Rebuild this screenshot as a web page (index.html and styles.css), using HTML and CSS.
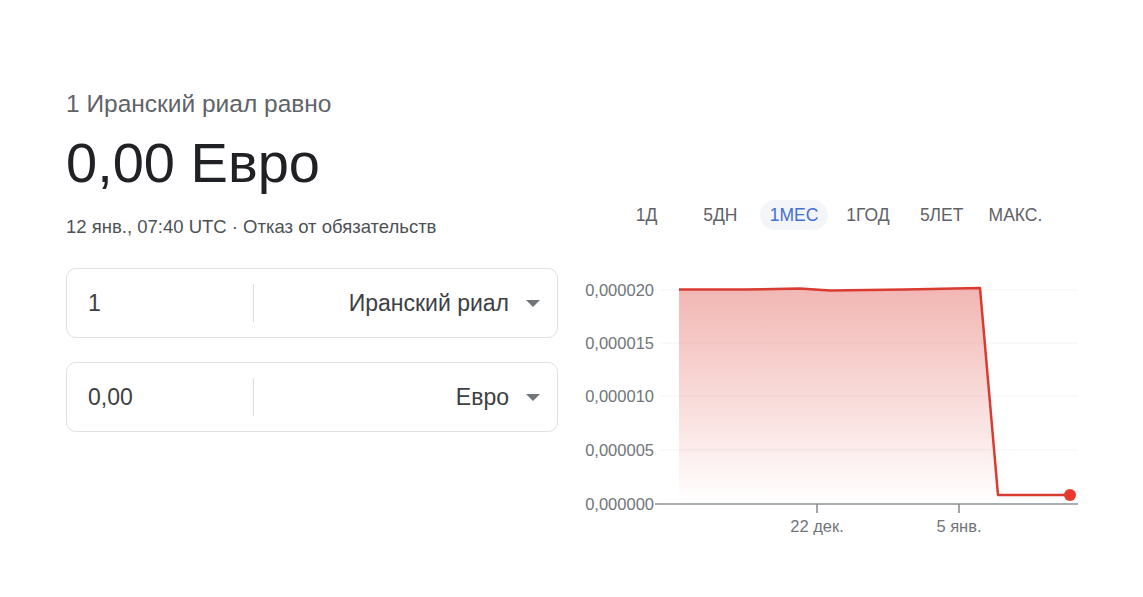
FILE: index.html
```html
<!DOCTYPE html>
<html lang="ru">
<head>
<meta charset="utf-8">
<title>Конвертер валют</title>
<link rel="stylesheet" href="styles.css">
</head>
<body>
<div class="page">
  <div class="eq">1 Иранский риал равно</div>
  <div class="result">0,00 Евро</div>
  <div class="row">
    <div class="left">
      <div class="meta">12 янв., 07:40 UTC · Отказ от обязательств</div>
      <div class="field first">
        <div class="amount">1</div>
        <div class="sep"></div>
        <div class="currency">Иранский риал<span class="caret"></span></div>
      </div>
      <div class="field">
        <div class="amount">0,00</div>
        <div class="sep"></div>
        <div class="currency">Евро<span class="caret"></span></div>
      </div>
    </div>
    <div class="right">
      <div class="tabs">
        <div class="tab">1Д</div>
        <div class="tab">5ДН</div>
        <div class="tab active">1МЕС</div>
        <div class="tab">1ГОД</div>
        <div class="tab">5ЛЕТ</div>
        <div class="tab">МАКС.</div>
      </div>
      <svg class="chart" width="510" height="270" viewBox="0 0 510 270">
        <defs>
          <linearGradient id="fill" x1="0" y1="0" x2="0" y2="1" gradientUnits="objectBoundingBox">
            <stop offset="0" stop-color="#e0524a" stop-opacity="0.42"/>
            <stop offset="1" stop-color="#e0524a" stop-opacity="0"/>
          </linearGradient>
        </defs>
        <g class="grid">
          <line x1="85" y1="20" x2="503" y2="20"/>
          <line x1="85" y1="73" x2="503" y2="73"/>
          <line x1="85" y1="126" x2="503" y2="126"/>
          <line x1="85" y1="180" x2="503" y2="180"/>
        </g>
        <g class="ylab">
          <text x="79" y="26">0,000020</text>
          <text x="79" y="79">0,000015</text>
          <text x="79" y="132">0,000010</text>
          <text x="79" y="186">0,000005</text>
          <text x="79" y="240">0,000000</text>
        </g>
        <path class="area" d="M104 19.5 L170 19.5 L225 18.5 L255 20.5 L330 19.5 L405 18 L423 225 L495 225 L495 234 L104 234 Z"/>
        <line class="axis" x1="80" y1="234" x2="503" y2="234"/>
        <line class="tick" x1="242" y1="234" x2="242" y2="243"/>
        <line class="tick" x1="384" y1="234" x2="384" y2="243"/>
        <g class="xlab">
          <text x="242" y="262">22 дек.</text>
          <text x="384" y="262">5 янв.</text>
        </g>
        <path class="line" d="M104 19.5 L170 19.5 L225 18.5 L255 20.5 L330 19.5 L405 18 L423 225 L495 225"/>
        <circle class="dot" cx="495" cy="225" r="6"/>
      </svg>
    </div>
  </div>
</div>
</body>
</html>
```
FILE: styles.css
```css
* { box-sizing: border-box; }
html, body { margin: 0; background: #fff; }
body { font-family: "Liberation Sans", Arial, sans-serif; }
.page { padding: 90px 0 0 66px; }
.eq { font-size: 24.5px; line-height: 28px; color: #5f6368; }
.result { font-size: 56px; line-height: 64px; color: #202124; margin-top: 13px; }
.row { display: flex; margin-top: 5px; }
.left { width: 492px; padding-top: 15px; }
.meta { font-size: 18.5px; line-height: 24px; color: #4d5156; }
.field {
  display: flex;
  align-items: center;
  height: 70px;
  border: 1px solid #dfe1e5;
  border-radius: 10px;
  margin-top: 24px;
}
.field.first { margin-top: 29px; }
.amount { width: 186px; padding-left: 21px; font-size: 23px; color: #3c4043; }
.sep { width: 1px; height: 38px; background: #dadce0; }
.currency {
  flex: 1;
  display: flex;
  justify-content: flex-end;
  align-items: center;
  padding-right: 17px;
  font-size: 23px;
  color: #3c4043;
}
.caret {
  width: 0; height: 0;
  margin-left: 17px;
  border-left: 7px solid transparent;
  border-right: 7px solid transparent;
  border-top: 7px solid #70757a;
}
.right { margin-left: 17px; }
.tabs {
  display: grid;
  grid-template-columns: repeat(6, 73.8px);
  height: 30px;
  padding-left: 34.6px;
}
.tab {
  display: flex;
  align-items: center;
  justify-content: center;
  margin: 0 3px;
  border-radius: 15px;
  font-size: 17.5px;
  color: #5f6368;
}
.tab.active { background: #f3f5f8; color: #4470d4; }
.chart { display: block; margin-top: 40px; overflow: visible; }
.grid line { stroke: #f1f3f4; stroke-width: 1; }
.axis { stroke: #a9adb2; stroke-width: 2; }
.tick { stroke: #80868b; stroke-width: 1.5; }
.ylab text { font-size: 16.5px; fill: #70757a; text-anchor: end; font-family: "Liberation Sans", Arial, sans-serif; }
.xlab text { font-size: 16.5px; fill: #70757a; text-anchor: middle; font-family: "Liberation Sans", Arial, sans-serif; }
.area { fill: url(#fill); }
.line { fill: none; stroke: #d93b30; stroke-width: 2.5; stroke-linejoin: round; }
.dot { fill: #e8392c; }
```
